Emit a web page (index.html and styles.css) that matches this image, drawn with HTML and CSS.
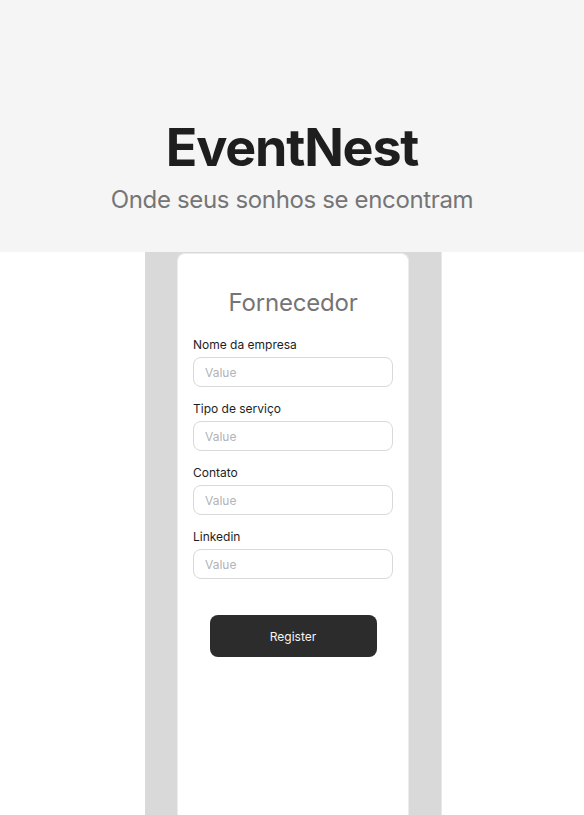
FILE: index.html
```html
<!DOCTYPE html>
<html lang="pt">
<head>
<meta charset="utf-8">
<title>EventNest</title>
<link rel="stylesheet" href="styles.css">
</head>
<body>
<header class="hero">
  <h1 class="brand">EventNest</h1>
  <p class="tagline">Onde seus sonhos se encontram</p>
</header>
<main class="stage">
  <div class="column">
    <form class="card">
      <h2 class="card-title">Fornecedor</h2>
      <label class="field">
        <span class="label">Nome da empresa</span>
        <span class="input">Value</span>
      </label>
      <label class="field">
        <span class="label">Tipo de serviço</span>
        <span class="input">Value</span>
      </label>
      <label class="field">
        <span class="label">Contato</span>
        <span class="input">Value</span>
      </label>
      <label class="field">
        <span class="label">Linkedin</span>
        <span class="input">Value</span>
      </label>
      <button type="button" class="btn">Register</button>
    </form>
  </div>
</main>
</body>
</html>
```
FILE: styles.css
```css
* { box-sizing: border-box; }
html, body { margin: 0; padding: 0; }
body {
  width: 584px;
  height: 815px;
  overflow: hidden;
  background: #ffffff;
  font-family: Inter, "Noto Sans", sans-serif;
  display: flex;
  flex-direction: column;
}
.hero {
  height: 252px;
  background: #f5f5f5;
  display: flex;
  flex-direction: column;
  align-items: center;
  padding-top: 118px;
}
.brand {
  margin: 0;
  font-size: 52px;
  font-weight: 700;
  letter-spacing: -1.2px;
  line-height: 60px;
  color: #1e1e1e;
}
.tagline {
  margin: 7px 0 0;
  font-size: 24px;
  font-weight: 400;
  letter-spacing: -0.35px;
  line-height: 29px;
  color: #757575;
}
.stage {
  flex: 1;
  display: flex;
  justify-content: center;
  padding-left: 2px;
}
.column {
  width: 297px;
  background: #d9d9d9;
  border-right: 1px solid #e8e8e8;
  display: flex;
  justify-content: center;
  padding-left: 1px;
}
.card {
  width: 232px;
  margin-top: 1px;
  background: #ffffff;
  border-radius: 8px 8px 0 0;
  border: 1px solid #ececec;
  border-bottom: none;
  display: flex;
  flex-direction: column;
  align-items: center;
  padding: 34px 16px 0;
}
.card-title {
  margin: 0 0 20px;
  font-size: 24px;
  font-weight: 400;
  letter-spacing: -0.2px;
  line-height: 29px;
  color: #757575;
}
.field {
  width: 200px;
  display: flex;
  flex-direction: column;
  gap: 4px;
  margin-bottom: 14px;
}
.label {
  font-size: 12px;
  line-height: 16px;
  color: #1e1e1e;
}
.input {
  height: 30px;
  border: 1px solid #d9d9d9;
  border-radius: 8px;
  padding: 0 11px;
  display: flex;
  align-items: center;
  font-size: 12px;
  color: #b3b3b3;
}
.btn {
  margin-top: 22px;
  width: 167px;
  height: 42px;
  border: none;
  border-radius: 8px;
  background: #2c2c2c;
  color: #f5f5f5;
  font-family: Inter, "Noto Sans", sans-serif;
  font-size: 12px;
}
```
